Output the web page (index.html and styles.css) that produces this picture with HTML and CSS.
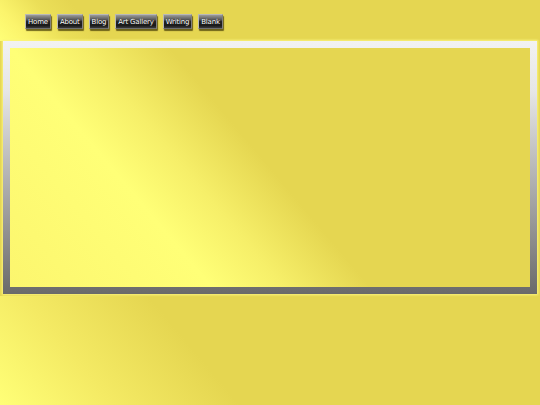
FILE: index.html
```html
<!DOCTYPE html>
<html>
<head>
<meta charset="utf-8">
<link rel="stylesheet" href="styles.css">
</head>
<body>
<nav class="nav">
  <a class="btn" href="#">Home</a>
  <a class="btn" href="#">About</a>
  <a class="btn" href="#">Blog</a>
  <a class="btn" href="#">Art Gallery</a>
  <a class="btn" href="#">Writing</a>
  <a class="btn" href="#">Blank</a>
</nav>
<main class="frame"></main>
</body>
</html>
```
FILE: styles.css
```css
html, body {
  margin: 0;
  padding: 0;
}
body {
  width: 540px;
  height: 405px;
  overflow: hidden;
  background-color: #e5d651;
  background-image:
    linear-gradient(50deg, #ffff77 0%, #f4ea64 18%, #e5d651 38%),
    linear-gradient(50deg, #ffff77 0%, #fbf46c 5%, #ebdf58 12%, #e5d651 18%);
  background-size: 540px 109px, 540px 41px;
  background-position: 0 296px, 0 0;
  background-repeat: no-repeat;
  font-family: "Comic Sans MS", "DejaVu Sans", sans-serif;
}
.nav {
  display: flex;
  gap: 6px;
  padding: 14px 0 0 25px;
  height: 15px;
}
.btn {
  display: flex;
  align-items: center;
  height: 13px;
  padding: 0 2px;
  font-size: 7px;
  color: #fff;
  text-decoration: none;
  letter-spacing: -0.2px;
  border: 1px solid #b8b8b8;
  border-bottom-color: #707070;
  border-right-color: #808080;
  border-radius: 1px;
  background: linear-gradient(#9a9a9a 0%, #5a5a5a 35%, #262626 50%, #1a1a1a 80%, #3a3a3a 100%);
  box-shadow: 1px 2px 1px rgba(60, 50, 0, 0.7);
  text-shadow: 0 0 1px #000;
}
.frame {
  display: block;
  margin: 12px 3px 0 3px;
  height: 239px;
  border: 7px solid #aaa;
  border-image: linear-gradient(#f2f2f2 0%, #e6e6e6 20%, #9a9a9a 70%, #6a6a6a 100%) 7;
  background: linear-gradient(50deg, #fcf66e 0%, #ffff77 28%, #f6ef69 38%, #e5d651 50%);
  box-shadow: 0 0 2px 1px #fbf47c;
}
```
